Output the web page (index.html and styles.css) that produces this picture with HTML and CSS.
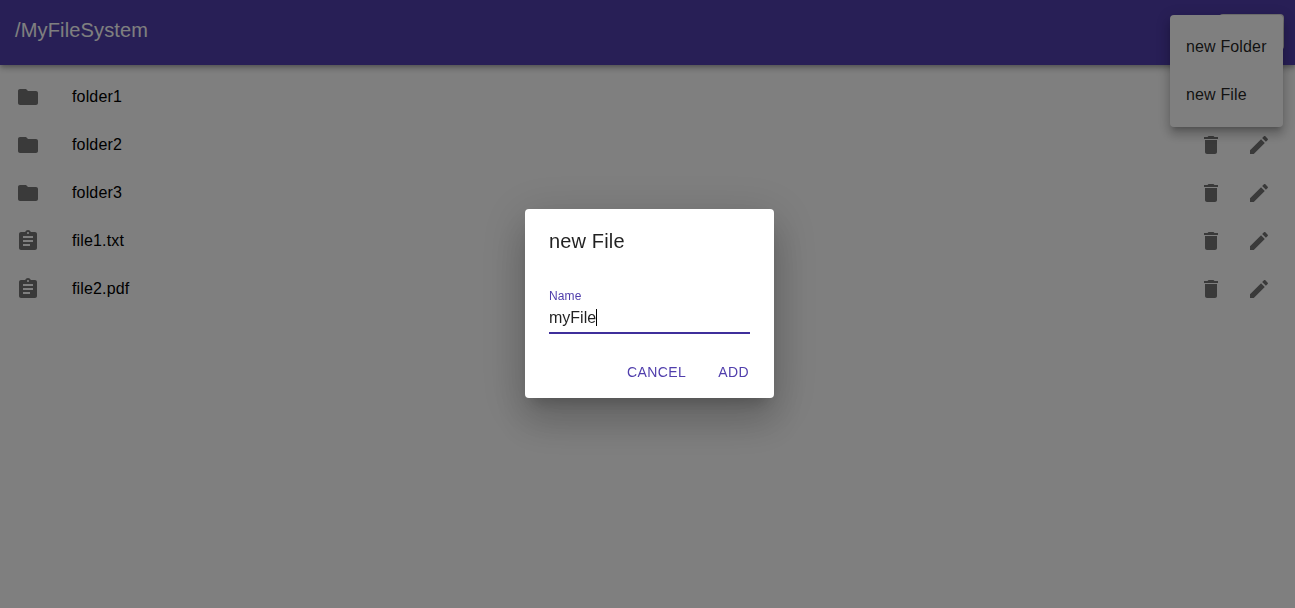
FILE: index.html
```html
<!DOCTYPE html>
<html lang="en">
<head>
<meta charset="utf-8">
<title>MyFileSystem</title>
<link rel="stylesheet" href="styles.css">
</head>
<body>
<svg class="symbols" aria-hidden="true">
  <symbol id="folder" viewBox="0 0 24 24"><path d="M10 4H4c-1.1 0-1.990.9-1.990 2L2 18c0 1.100.9 2 2 2h16c1.100 0 2-.9 2-2V8c0-1.100-.9-2-2-2h-8l-2-2z"/></symbol>
  <symbol id="file" viewBox="0 0 24 24"><path d="M19 3h-4.180C14.400 1.840 13.300 1 12 1c-1.300 0-2.400.84-2.820 2H5c-1.100 0-2 .9-2 2v14c0 1.100.9 2 2 2h14c1.100 0 2-.9 2-2V5c0-1.100-.9-2-2-2zm-7 0c.55 0 1 .45 1 1s-.45 1-1 1-1-.45-1-1 .45-1 1-1zm2 14H7v-2h7v2zm3-4H7v-2h10v2zm0-4H7V7h10v2z"/></symbol>
  <symbol id="trash" viewBox="0 0 24 24"><path d="M6 19c0 1.100.9 2 2 2h8c1.100 0 2-.9 2-2V7H6v12zM19 4h-3.500l-1-1h-5l-1 1H5v2h14V4z"/></symbol>
  <symbol id="pencil" viewBox="0 0 24 24"><path d="M3 17.250V21h3.750L17.810 9.940l-3.750-3.750L3 17.250zM20.710 7.040c.39-.39.39-1.020 0-1.410l-2.340-2.340c-.39-.39-1.020-.39-1.410 0l-1.830 1.830 3.750 3.750 1.830-1.830z"/></symbol>
</svg>
<header class="bar">
  <h1 class="path">/MyFileSystem</h1>
  <button class="add-button" aria-label="Add"></button>
</header>
<ul class="list">
  <li class="row"><svg class="icon"><use href="#folder"/></svg><span class="name">folder1</span><svg class="icon"><use href="#trash"/></svg><svg class="icon"><use href="#pencil"/></svg></li>
  <li class="row"><svg class="icon"><use href="#folder"/></svg><span class="name">folder2</span><svg class="icon"><use href="#trash"/></svg><svg class="icon"><use href="#pencil"/></svg></li>
  <li class="row"><svg class="icon"><use href="#folder"/></svg><span class="name">folder3</span><svg class="icon"><use href="#trash"/></svg><svg class="icon"><use href="#pencil"/></svg></li>
  <li class="row"><svg class="icon"><use href="#file"/></svg><span class="name">file1.txt</span><svg class="icon"><use href="#trash"/></svg><svg class="icon"><use href="#pencil"/></svg></li>
  <li class="row"><svg class="icon"><use href="#file"/></svg><span class="name">file2.pdf</span><svg class="icon"><use href="#trash"/></svg><svg class="icon"><use href="#pencil"/></svg></li>
</ul>
<div class="menu">
  <div class="menu-item">new Folder</div>
  <div class="menu-item">new File</div>
</div>
<div class="backdrop">
  <div class="dialog" role="dialog">
    <h2 class="dialog-title">new File</h2>
    <div class="field">
      <span class="label">Name</span>
      <div class="value">myFile<span class="caret"></span></div>
    </div>
    <div class="actions">
      <button class="action">CANCEL</button>
      <button class="action">ADD</button>
    </div>
  </div>
</div>
</body>
</html>
```
FILE: styles.css
```css
* { box-sizing: border-box; }
body {
  margin: 0;
  height: 608px;
  overflow: hidden;
  background: #fff;
  color: #000;
  font: 16px/24px "Liberation Sans", Arial, sans-serif;
}
.symbols { position: absolute; width: 0; height: 0; }
.bar {
  position: relative;
  display: flex;
  justify-content: space-between;
  align-items: flex-start;
  height: 65px;
  padding: 14px 11px 0 15px;
  background: #503eac;
  box-shadow: 0 2px 4px -1px rgba(0,0,0,.2), 0 4px 5px rgba(0,0,0,.14), 0 1px 10px rgba(0,0,0,.12);
}
.path {
  margin: 0;
  color: #fff;
  font-size: 20px;
  font-weight: 400;
  line-height: 32px;
  letter-spacing: .15px;
}
.add-button {
  width: 65px;
  height: 36px;
  border: 0;
  border-radius: 4px;
  background: #e0e0e0;
}
.list { margin: 0; padding: 8px 0; list-style: none; }
.row {
  display: flex;
  align-items: center;
  gap: 24px;
  height: 48px;
  padding: 0 24px 0 16px;
}
.icon { width: 24px; height: 24px; flex: none; fill: #757575; }
.name { flex: 1; padding-left: 8px; letter-spacing: .15px; }
.menu {
  position: absolute;
  top: 15px;
  right: 12px;
  width: 113px;
  height: 112px;
  padding: 8px 0;
  border-radius: 4px;
  background: #fff;
  box-shadow: 0 5px 5px -3px rgba(0,0,0,.2), 0 8px 10px 1px rgba(0,0,0,.14), 0 3px 14px 2px rgba(0,0,0,.12);
}
.menu-item {
  height: 48px;
  padding: 0 16px;
  color: rgba(0,0,0,.87);
  line-height: 47px;
  letter-spacing: .15px;
  white-space: nowrap;
}
.backdrop {
  position: fixed;
  inset: 0;
  display: flex;
  align-items: center;
  justify-content: center;
  padding-left: 4px;
  background: rgba(0,0,0,.5);
}
.dialog {
  width: 249px;
  height: 189px;
  margin-top: -1px;
  border-radius: 4px;
  background: #fff;
  box-shadow: 0 11px 15px -7px rgba(0,0,0,.2), 0 24px 38px 3px rgba(0,0,0,.14), 0 9px 46px 8px rgba(0,0,0,.12);
}
.dialog-title {
  margin: 0;
  padding: 16px 24px;
  color: rgba(0,0,0,.87);
  font-size: 20px;
  font-weight: 400;
  line-height: 32px;
  letter-spacing: .15px;
}
.field {
  display: flex;
  flex-direction: column;
  height: 61px;
  margin: 0 24px;
  padding-top: 16px;
  border-bottom: 2px solid #3f2f9b;
}
.label { color: #503eac; font-size: 12px; line-height: 14px; letter-spacing: .11px; }
.value {
  display: flex;
  align-items: center;
  height: 29px;
  color: rgba(0,0,0,.87);
}
.caret { width: 1px; height: 17px; background: #000; }
.actions {
  display: flex;
  justify-content: flex-end;
  gap: 16px;
  padding: 20px 17px 0 16px;
}
.action {
  height: 36px;
  padding: 0 8px;
  border: 0;
  background: none;
  color: #503eac;
  font: 14px/36px "Liberation Sans", Arial, sans-serif;
  letter-spacing: .4px;
}
```
